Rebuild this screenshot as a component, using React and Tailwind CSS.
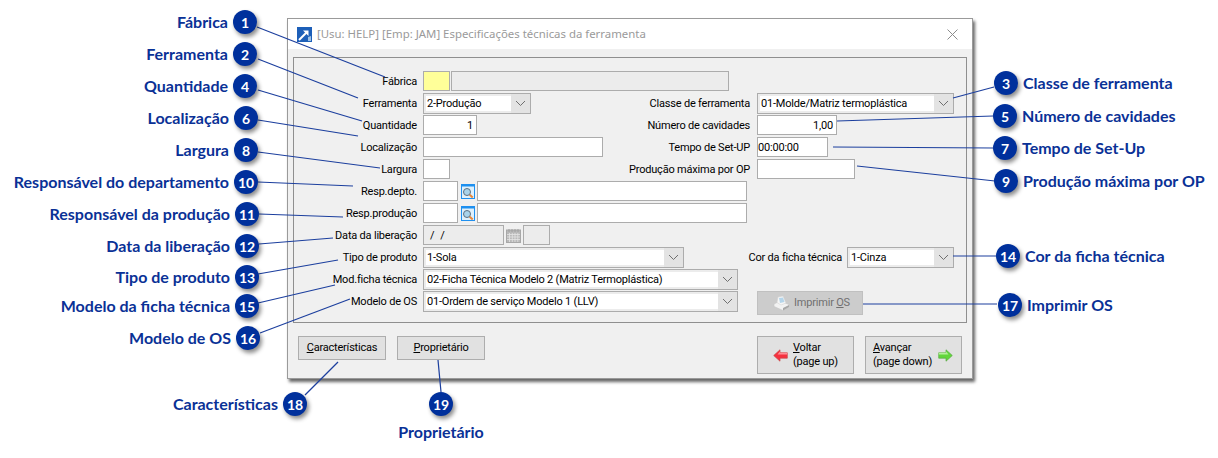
import React from "react";

const Chevron = () => (
  <svg width="11" height="7" viewBox="0 0 11 7" fill="none" stroke="#6f6f6f" strokeWidth="1"><path d="M1 1l4.5 4.5L10 1" /></svg>
);

const Field = ({ className = "", children }) => (
  <div className={`h-5 border border-[#acacac] bg-white flex items-center shrink-0 overflow-hidden pt-[2px] ${className}`}>{children}</div>
);

const Select = ({ className, value }) => (
  <div className={`h-[21px] border border-[#acacac] bg-[#ececec] flex items-center shrink-0 pl-[2px] ${className}`}>
    <div className="flex-1 h-[15px] bg-white flex items-center pl-[1px] pt-[2px] whitespace-nowrap overflow-hidden">{value}</div>
    <div className="w-[19px] flex justify-center bg-[#e3e3e3] self-stretch items-center"><Chevron /></div>
  </div>
);

const Lookup = () => (
  <svg width="14" height="15" viewBox="0 0 14 15" className="shrink-0">
    <rect x="0.5" y="0.5" width="13" height="14" fill="#dff0fb" stroke="#1e90f0" />
    <rect x="0" y="0" width="14" height="2.5" fill="#1e90f0" />
    <circle cx="6" cy="8" r="3.5" fill="#a9d3ea" stroke="#5c6f80" />
    <path d="M8.7 10.7l3 2.8" stroke="#e8873a" strokeWidth="2" />
  </svg>
);

const Calendar = () => (
  <svg width="15" height="15" viewBox="0 0 15 15" className="shrink-0">
    <rect x="0.5" y="2" width="14" height="12.5" fill="#b9b9b9" stroke="#a8a8a8" />
    <path d="M3 4v-3M6 4v-3M9 4v-3M12 4v-3" stroke="#a0a0a0" />
    <path d="M1 6.5h13M1 9h13M1 11.5h13M3.5 5v9M6.3 5v9M9 5v9M11.8 5v9" stroke="#e4e4e4" strokeWidth="0.8" />
  </svg>
);

const Printer = () => (
  <svg width="17" height="15" viewBox="0 0 17 15" className="shrink-0">
    <path d="M1 8l6-3 9 3.5v2.5l-6 3.5-9-4z" fill="#f2f2f2" stroke="#c6c6c6" strokeWidth="0.6" />
    <path d="M4 6.5l1-5.5 5-1 3 7-5 2z" fill="#f6f6f6" stroke="#cfcfcf" strokeWidth="0.5" />
    <path d="M6 2l4-0.5 1.5 4.5-4.5 1z" fill="#b5d5ea" />
    <path d="M10 14.5l6-3.5v-2l-6 3z" fill="#a8a8a8" />
  </svg>
);

const ArrowLeft = () => (
  <svg width="15" height="13" viewBox="0 0 15 13" className="shrink-0">
    <path d="M0.7 6.5L7 0.8v3h7.3v5.4H7v3z" fill="#f5313f" stroke="#c94a4a" strokeWidth="0.7" />
    <path d="M7 3.8h7.3v1.6H4.5L7 2.5z" fill="#ff8d95" />
  </svg>
);

const ArrowRight = () => (
  <svg width="15" height="13" viewBox="0 0 15 13" className="shrink-0">
    <path d="M14.3 6.5L8 0.8v3H0.7v5.4H8v3z" fill="#62d63c" stroke="#5aa845" strokeWidth="0.7" />
    <path d="M8 3.8H0.7v1.6h9.8L8 2.5z" fill="#b4f09a" />
  </svg>
);

const Label = ({ children, className = "w-[123px]" }) => (
  <div className={`text-right whitespace-nowrap shrink-0 pt-[2px] ${className}`}>{children}</div>
);

const Row = ({ label, children, right }) => (
  <div className="h-[22px] flex items-center">
    <Label>{label}</Label>
    <div className="ml-[6px] flex items-center">{children}</div>
    {right}
  </div>
);

const Right = ({ label, children }) => (
  <div className="absolute left-[316px] w-[360px] flex items-center gap-[7px] h-[22px]">
    <Label className="w-[140px]">{label}</Label>
    <div>{children}</div>
  </div>
);

const Btn = ({ className = "", children }) => (
  <div className={`border border-[#adadad] bg-[#e1e1e1] flex items-center shrink-0 ${className}`}>{children}</div>
);

const Badge = ({ n }) => (
  <div className="w-6 h-6 rounded-full bg-[#00309c] text-white flex items-center justify-center text-[14px] font-bold shrink-0 shadow-[2px_3px_4px_rgba(0,0,0,0.45)]">{n}</div>
);

const left = [
  ["1", "Fábrica", "right-[961px] top-[10px]"],
  ["2", "Ferramenta", "right-[961px] top-[42px]"],
  ["4", "Quantidade", "right-[961px] top-[74px]"],
  ["6", "Localização", "right-[960px] top-[106px]"],
  ["8", "Largura", "right-[960px] top-[138px]"],
  ["10", "Responsável do departamento", "right-[960px] top-[170px]"],
  ["11", "Responsável da produção", "right-[959px] top-[202px]"],
  ["12", "Data da liberação", "right-[959px] top-[234px]"],
  ["13", "Tipo de produto", "right-[959px] top-[265px]"],
  ["15", "Modelo da ficha técnica", "right-[959px] top-[294px]"],
  ["16", "Modelo de OS", "right-[958px] top-[326px]"],
  ["18", "Características", "right-[911px] top-[392px]"],
];

const rightNodes = [
  ["3", "Classe de ferramenta", "left-[994px] top-[71px]"],
  ["5", "Número de cavidades", "left-[993px] top-[104px]"],
  ["7", "Tempo de Set-Up", "left-[993px] top-[136px]"],
  ["9", "Produção máxima por OP", "left-[994px] top-[169px]"],
  ["14", "Cor da ficha técnica", "left-[996px] top-[244px]"],
  ["17", "Imprimir OS", "left-[998px] top-[293px]"],
];

const lines = [
  [257, 27, 385, 77], [258, 59, 358, 98], [258, 90, 362, 121], [258, 120, 358, 136],
  [258, 152, 380, 168], [258, 182, 353, 186], [259, 214, 343, 217], [259, 244, 333, 238],
  [258, 274, 338, 260], [258, 303, 335, 285], [260, 333, 350, 299], [305, 395, 338, 362],
  [441, 392, 438, 360], [953, 98, 994, 87], [837, 121, 993, 116], [833, 147, 993, 148],
  [857, 166, 995, 181], [953, 256, 996, 256], [863, 304, 997, 304],
];

export default function App() {
  return (
    <div className="relative w-[1218px] h-[458px] bg-white overflow-hidden font-['Lato',sans-serif]">
      <div className="absolute left-[287px] top-[18px] w-[686px] h-[361px] border border-[#9a9a9a] bg-[#f0f0f0] flex flex-col text-[11px] tracking-[-0.2px] text-black font-['Roboto',sans-serif] shadow-[2px_3px_3px_rgba(0,0,0,0.6)]">
        <div className="h-[30px] bg-white flex items-center pl-[9px] pr-[10px] shrink-0">
          <svg width="15" height="15" viewBox="0 0 15 15" className="shrink-0">
            <rect width="15" height="15" fill="#1d5fb8" />
            <path d="M2 13L10 5" stroke="#fff" strokeWidth="2" />
            <path d="M6 3.5h5.5V9z" fill="#fff" />
            <path d="M11 14v-4l3-1v5z" fill="#9cc0e4" />
          </svg>
          <div className="ml-[5px] text-[#9a9a9a] whitespace-nowrap text-[11.4px] tracking-normal font-['Noto_Sans',sans-serif]">[Usu: HELP] [Emp: JAM] Especificações técnicas da ferramenta</div>
          <svg width="11" height="11" viewBox="0 0 11 11" className="ml-auto mr-[4px]" stroke="#8c8c8c" fill="none"><path d="M0.5 0.5l10 10M10.5 0.5l-10 10" /></svg>
        </div>

        <div className="relative mx-[5px] mt-[8px] h-[266px] border border-[#8f8f8f] bg-[#f0f0f0] pt-[12px] shrink-0">
          <Row label="Fábrica">
            <div className="w-[27px] h-5 bg-[#ffff99] border border-[#acacac]" />
            <div className="ml-[1px] w-[278px] h-5 border border-[#acacac] bg-[#ececec]" />
          </Row>
          <Row label="Ferramenta" right={<Right label="Classe de ferramenta"><Select className="w-[197px]" value="01-Molde/Matriz termoplástica" /></Right>}>
            <Select className="w-[108px]" value="2-Produção" />
          </Row>
          <Row label="Quantidade" right={<Right label="Número de cavidades"><Field className="w-[80px] justify-end pr-[3px]">1,00</Field></Right>}>
            <Field className="w-[54px] justify-end pr-[3px]">1</Field>
          </Row>
          <Row label="Localização" right={<Right label="Tempo de Set-UP"><Field className="w-[71px]">00:00:00</Field></Right>}>
            <Field className="w-[180px]" />
          </Row>
          <Row label="Largura" right={<Right label="Produção máxima por OP"><Field className="w-[98px]" /></Right>}>
            <Field className="w-[27px]" />
          </Row>
          <Row label="Resp.depto.">
            <Field className="w-[35px]" />
            <div className="ml-[3px]"><Lookup /></div>
            <Field className="ml-[2px] w-[270px]" />
          </Row>
          <Row label="Resp.produção">
            <Field className="w-[35px]" />
            <div className="ml-[3px]"><Lookup /></div>
            <Field className="ml-[2px] w-[270px]" />
          </Row>
          <Row label="Data da liberação">
            <Field className="w-[81px] !bg-[#ececec] pl-[6px] gap-[6px]"><span>/</span><span>/</span></Field>
            <div className="ml-[2px]"><Calendar /></div>
            <Field className="ml-[2px] w-[27px] !bg-[#ececec]" />
          </Row>
          <Row label="Tipo de produto" right={
            <div className="absolute left-[336px] w-[340px] h-[22px] flex items-center">
              <Label className="w-[212px]">Cor da ficha técnica</Label>
              <Select className="ml-[5px] w-[107px]" value="1-Cinza" />
            </div>
          }>
            <Select className="w-[261px]" value="1-Sola" />
          </Row>
          <Row label="Mod.ficha técnica">
            <Select className="w-[315px]" value="02-Ficha Técnica Modelo 2 (Matriz Termoplástica)" />
          </Row>
          <Row label="Modelo de OS" right={
            <Btn className="ml-[19px] w-[106px] h-6 !bg-[#cccccc] !border-[#c0c0c0] text-[#707070] pl-[15px] gap-[4px] translate-y-[2px]">
              <Printer /><span>Imprimir <span className="underline">O</span>S</span>
            </Btn>
          }>
            <Select className="w-[315px]" value="01-Ordem de serviço Modelo 1 (LLV)" />
          </Row>
        </div>

        <div className="flex items-start mt-[13px] pl-[10px] pr-[10px]">
          <Btn className="w-[88px] h-6 justify-center pt-[1px]"><span><span className="underline">C</span>aracterísticas</span></Btn>
          <Btn className="ml-[11px] w-[88px] h-6 justify-center pt-[1px]"><span><span className="underline">P</span>roprietário</span></Btn>
          <Btn className="ml-auto w-[97px] h-[38px] pl-[15px] gap-[5px] leading-[14px]">
            <ArrowLeft />
            <div><span className="underline">V</span>oltar<br />(page up)</div>
          </Btn>
          <Btn className="ml-[11px] w-[97px] h-[38px] pl-[7px] pr-[8px] justify-between leading-[14px]">
            <div className="whitespace-nowrap"><span className="underline">A</span>vançar<br />(page down)</div>
            <ArrowRight />
          </Btn>
        </div>
      </div>

      <svg width="1218" height="458" className="absolute left-0 top-0 pointer-events-none" stroke="#1c3f9e" strokeWidth="1.2">
        {lines.map(([a, b, c, d], i) => <line key={i} x1={a} y1={b} x2={c} y2={d} />)}
      </svg>

      {left.map(([n, t, pos]) => (
        <div key={n} className={`absolute flex items-center gap-[5px] text-[16px] font-bold text-[#0a3196] whitespace-nowrap ${pos}`}>
          <span>{t}</span><Badge n={n} />
        </div>
      ))}
      {rightNodes.map(([n, t, pos]) => (
        <div key={n} className={`absolute flex items-center gap-[5px] text-[16px] font-bold text-[#0a3196] whitespace-nowrap ${pos}`}>
          <Badge n={n} /><span>{t}</span>
        </div>
      ))}
      <div className="absolute left-[389px] top-[392px] w-[104px] flex flex-col items-center gap-[4px] text-[16px] font-bold text-[#0a3196] whitespace-nowrap">
        <Badge n="19" /><span>Proprietário</span>
      </div>
    </div>
  );
}
